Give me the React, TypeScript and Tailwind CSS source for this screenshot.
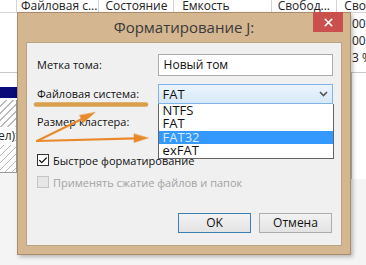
import { Check, X } from "lucide-react";

const font = { fontFamily: '"Open Sans", "Noto Sans", sans-serif' };

function Header() {
  return (
    <div className="flex h-[13px] overflow-hidden border-b border-[#d5d5d5] bg-white text-[12px] leading-[12px] text-[#222]">
      <div className="w-[17px] border-r border-[#d5d5d5]" />
      <div className="w-[83px] border-r border-[#d5d5d5] pl-[4px]">Файловая с...</div>
      <div className="w-[75px] border-r border-[#d5d5d5] pl-[6px]">Состояние</div>
      <div className="w-[98px] border-r border-[#d5d5d5] pl-[8px]">Емкость</div>
      <div className="w-[66px] border-r border-[#d5d5d5] pl-[6px]">Свобод...</div>
      <div className="flex-1 pl-[7px]">Сво</div>
    </div>
  );
}

function Background() {
  return (
    <div className="flex h-[265px] w-[366px] flex-col bg-[#f4f4f4]">
      <Header />
      <div className="flex h-[59px] justify-end bg-white text-[12px] text-[#222]">
        <div className="flex w-[14px] flex-col gap-[2px] pt-[3px] leading-[15px]">
          <span>00</span>
          <span>00</span>
          <span className="whitespace-nowrap">3 %</span>
        </div>
      </div>
      <div className="flex flex-1 border-t border-[#c8c8c8]">
        <div className="flex w-[17px] flex-col">
          <div className="h-[14px] bg-white" />
          <div className="h-[11px] bg-[#0a0a78]" />
          <div className="h-[2px] bg-white" />
          <div className="flex h-[73px] items-center overflow-hidden border-r border-b border-[#999] bg-[repeating-linear-gradient(135deg,#ffffff_0px,#ffffff_4px,#b8b8b8_4px,#b8b8b8_5px)] text-[12px] text-[#222]">
            <span className="-ml-[2px] bg-white">ел)</span>
          </div>
        </div>
        <div className="flex-1" />
        <div className="flex w-[15px] flex-col">
          <div className="h-[106px] border-l border-[#bdbdbd] bg-white" />
        </div>
      </div>
    </div>
  );
}

function CheckRow({ label, checked, disabled }: { label: string; checked?: boolean; disabled?: boolean }) {
  return (
    <div className="flex h-[12px] items-center gap-[4px]">
      <div
        className={
          disabled
            ? "flex h-[12px] w-[12px] items-center justify-center border border-[#c4c4c4] bg-[#e6e6e6]"
            : "flex h-[12px] w-[12px] items-center justify-center border border-[#333] bg-white"
        }
      >
        {checked && <Check size={11} strokeWidth={3} className="text-[#111]" />}
      </div>
      <span className={disabled ? "text-[11px] leading-none text-[#a3a3a3]" : "text-[11px] leading-none text-[#111]"}>
        {label}
      </span>
    </div>
  );
}

function Dialog() {
  return (
    <div className="absolute left-[17px] top-[12px] flex h-[243px] w-[334px] flex-col border border-[#a98c69] bg-[#d4b690] shadow-[2px_2px_4px_rgba(0,0,0,0.25)]">
      <div className="relative flex h-[29px] items-center justify-center">
        <span className="text-[15px] text-[#3a3a3a]">Форматирование J:</span>
        <button className="absolute right-[7px] top-[-1px] flex h-[20px] w-[30px] items-center justify-center bg-[#c9504c]">
          <X size={13} strokeWidth={3} className="text-white" />
        </button>
      </div>
      <div className="mx-[8px] mb-[8px] flex-1 border border-[#b9a181] bg-[#f0f0f0] pt-[11px] pl-[10px] pr-[8px] text-[11px] text-[#111]">
        <div className="flex h-[22px] items-center">
          <span className="w-[121px]">Метка тома:</span>
          <div className="flex h-[22px] w-[176px] items-center border border-[#ababab] bg-white pl-[5px] text-[12px] leading-none">
            Новый том
          </div>
        </div>
        <div className="mt-[8px] flex h-[20px] items-center">
          <span className="w-[121px]">Файловая система:</span>
          <div className="relative w-[176px]">
            <div className="flex h-[20px] items-center justify-between border border-[#7eb4ea] bg-[linear-gradient(#ecf4fc,#d6e9f9)] pl-[4px] pr-[4px] text-[13px] leading-none">
              <span>FAT</span>
              <svg width="9" height="6" viewBox="0 0 9 6">
                <path d="M1 1 L4.5 4.5 L8 1" fill="none" stroke="#555" strokeWidth="1.6" />
              </svg>
            </div>
            <div className="absolute left-0 top-[20px] z-10 w-[176px] border border-[#646464] border-t-0 bg-white text-[13px] leading-[13.4px]">
              <div className="pl-[4px]">NTFS</div>
              <div className="pl-[4px]">FAT</div>
              <div className="bg-[#3399ff] pl-[4px] text-[#d8ecff]">FAT32</div>
              <div className="pl-[4px]">exFAT</div>
            </div>
          </div>
        </div>
        <div className="mt-[8px] flex h-[20px] items-center">
          <span className="w-[121px]">Размер кластера:</span>
          <div className="h-[20px] w-[176px] border border-[#ababab] bg-white" />
        </div>
        <div className="mt-[22px] flex flex-col gap-[10px]">
          <CheckRow label="Быстрое форматирование" checked />
          <CheckRow label="Применять сжатие файлов и папок" disabled />
        </div>
        <div className="mt-[25px] flex justify-end gap-[8px] pr-[1px]">
          <button className="h-[20px] w-[73px] border border-[#3c7fb1] bg-[linear-gradient(#f2f2f2,#e3e3e3)] text-[12px] leading-none text-[#111]">
            OK
          </button>
          <button className="h-[20px] w-[73px] border border-[#acacac] bg-[linear-gradient(#f2f2f2,#e3e3e3)] text-[12px] leading-none text-[#111]">
            Отмена
          </button>
        </div>
      </div>
    </div>
  );
}

function Marks() {
  return (
    <svg className="pointer-events-none absolute left-0 top-0 z-20" width="366" height="265" viewBox="0 0 366 265">
      <line x1="36" y1="104.5" x2="146" y2="104.5" stroke="#d99f4c" strokeWidth="4.5" strokeLinecap="round" />
      <g stroke="#e8892b" strokeWidth="2.2" strokeLinecap="round" fill="#e8892b">
        <line x1="37" y1="141" x2="84" y2="118" />
        <line x1="37" y1="141" x2="136" y2="138.3" />
        <polygon points="95,112.5 83.4,122.6 79.6,115.4" strokeWidth="0.5" />
        <polygon points="148,138 134,142.6 134,134" strokeWidth="0.5" />
      </g>
    </svg>
  );
}

export default function App() {
  return (
    <div className="relative h-[265px] w-[366px] overflow-hidden" style={font}>
      <Background />
      <Dialog />
      <Marks />
    </div>
  );
}
